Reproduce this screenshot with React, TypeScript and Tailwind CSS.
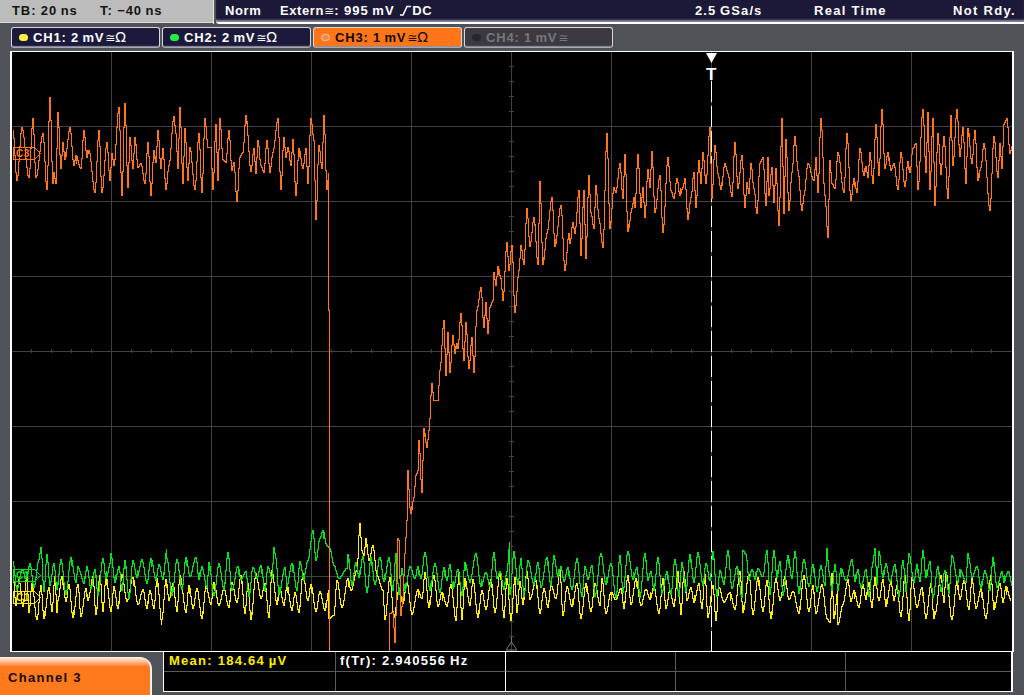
type Pt = [number, number];

const font = { fontFamily: '"Liberation Sans", "DejaVu Sans", sans-serif' };

// zoom crops were 3x, so these first points are still in crop coordinates
const fromCrop = (pts: number[], ox: number, oy: number): Pt[] => {
    const out: Pt[] = [];
    for (let i = 0; i < pts.length; i += 2) out.push([ox + pts[i] / 3, oy + pts[i + 1] / 3]);
    return out;
};

const ch3Flat = fromCrop(
    [
        36, 120, 47, 270, 62, 112, 85, 262, 96, 85, 105, 262, 125, 130, 138, 298, 146, 22, 155, 280, 160, 245, 165, 280, 170, 67, 180, 235, 186, 157, 192, 208,
        207, 112, 218, 225, 225, 195, 240, 235, 249, 120, 258, 200, 265, 180, 282, 305, 294, 120, 303, 307, 318, 157, 327, 270, 333, 190, 340, 225, 355, 50,
        363, 315, 372, 40, 381, 290, 388, 140, 397, 235, 403, 140, 412, 230, 420, 220, 432, 280, 440, 157, 450, 315, 458, 180, 464, 215, 470, 120, 480, 235,
        486, 175, 495, 297, 503, 225, 519, 78, 525, 130, 530, 235, 537, 50, 547, 280, 553, 115, 560, 270, 568, 170, 582, 297, 594, 130, 603, 307, 613, 85,
        622, 170, 630, 170, 637, 297, 645, 103, 650, 270, 658, 85, 667, 207, 676, 215, 685, 120, 692, 240, 700, 215, 708, 333, 716, 200, 725, 185, 735, 75,
        750, 243, 758, 175, 765, 250, 772, 150, 780, 225, 788, 245, 797, 150, 806, 245, 816, 185, 830, 85, 840, 297, 848, 140, 856, 200, 862, 170, 870, 225,
        877, 148, 885, 315, 895, 175, 906, 235, 915, 175, 922, 280, 930, 85, 938, 150, 946, 388, 955, 165, 963, 235, 968, 75, 978, 297, 985, 245, 985, 660,
    ],
    0,
    90,
).concat([
    [328, 310],
    [329, 310],
    [329, 652],
]);

const ch3Rise: Pt[] = [
    [389, 652], [389, 613], [392, 612], [394, 642], [397, 538], [398, 540], [400, 615], [402, 597], [404, 553], [406, 520], [407, 470], [409, 507], [410, 513],
    [413, 497], [415, 475], [417, 470], [418, 440], [421, 492], [423, 428], [426, 447], [428, 430], [431, 383], [433, 400], [437, 400], [439, 370], [443, 320],
    [445, 375], [447, 332], [449, 372], [452, 335], [454, 353], [456, 343], [457, 348], [460, 313], [463, 360], [465, 322], [468, 368], [471, 337], [473, 372],
    [476, 310], [480, 287], [483, 327], [485, 302], [487, 333], [489, 307], [492, 300], [493, 272], [495, 285], [497, 266], [500, 278], [502, 300], [506, 242],
    [508, 270], [511, 245], [514, 312], [518, 270], [520, 245], [523, 264], [526, 208], [529, 246], [533, 217], [537, 264], [539, 181], [542, 264], [546, 233],
    [551, 197], [554, 246], [560, 205], [564, 270], [568, 233], [569, 243], [572, 222], [574, 233], [578, 190], [580, 255], [583, 190], [585, 258], [588, 175],
    [590, 212], [593, 228], [595, 185], [598, 218], [602, 247], [606, 133], [609, 228], [613, 187], [615, 192], [619, 163], [622, 198], [624, 154], [627, 231],
    [631, 208], [633, 197], [634, 207], [637, 154], [640, 207], [642, 187], [644, 217], [647, 169], [649, 187], [651, 151], [654, 212], [659, 175], [662, 232],
    [667, 157], [670, 190], [673, 198], [676, 178], [679, 195], [682, 187], [684, 178], [687, 219], [690, 197], [693, 172], [695, 207], [698, 160], [700, 183],
    [702, 152], [705, 183], [709, 127], [711, 198], [714, 145], [717, 173], [720, 189], [724, 163], [727, 173], [731, 196], [734, 142], [737, 188], [741, 155],
    [744, 207], [746, 182], [748, 193], [750, 163], [753, 188], [756, 213], [759, 163], [762, 157], [765, 205], [767, 157], [768, 195], [771, 167], [773, 202],
    [775, 168], [778, 225], [781, 118], [783, 213], [785, 139], [788, 210], [791, 172], [794, 136], [797, 170], [801, 210], [803, 195], [807, 163], [813, 180],
    [815, 157], [817, 192], [820, 118], [824, 195], [827, 237], [829, 160], [831, 183], [834, 188], [837, 152], [843, 192], [846, 133], [850, 200], [853, 178],
    [856, 192], [859, 148], [863, 175], [865, 166], [867, 177], [869, 152], [872, 183], [875, 124], [878, 175], [881, 109], [884, 168], [887, 152], [890, 170],
    [893, 163], [897, 189], [900, 152], [904, 186], [907, 161], [909, 172], [912, 148], [915, 143], [917, 189], [922, 109], [925, 172], [927, 112], [929, 189],
    [932, 118], [934, 205], [937, 133], [940, 174], [943, 136], [947, 198], [950, 115], [952, 165], [956, 109], [959, 156], [962, 127], [965, 183], [967, 128],
    [971, 163], [974, 130], [977, 180], [980, 167], [983, 143], [989, 210], [993, 136], [997, 177], [999, 143], [1001, 168], [1003, 124], [1006, 118], [1009, 153],
    [1012, 143],
];

// small seeded generator so the noise is the same every run
function makeRandom(seed: number) {
    let s = seed;
    return () => {
        s = (s + 0x6d2b79f5) | 0;
        let t = Math.imul(s ^ (s >>> 15), 1 | s);
        t = (t + Math.imul(t ^ (t >>> 7), 61 | t)) ^ t;
        return ((t ^ (t >>> 14)) >>> 0) / 4294967296;
    };
}

function noise(seed: number, high: [number, number], low: [number, number], events: Pt[], peaks: Pt[]): Pt[] {
    const rnd = makeRandom(seed);
    const pts: Pt[] = [];
    let up = true;
    const from = events[0][0];
    const to = events[events.length - 1][0];
    for (let x = 12; x < 1012; x += 2.6 + rnd() * 3) {
        if (x > from && x < to) continue;
        const band = up ? high : low;
        pts.push([x, band[0] + rnd() * (band[1] - band[0])]);
        up = !up;
    }
    return [...pts, ...events, ...peaks].sort((a, b) => a[0] - b[0]);
}

const ch2 = noise(
    11,
    [550, 572],
    [576, 598],
    [
        [303, 575], [307, 560], [312, 530], [315, 560], [319, 538], [322, 530], [326, 545], [329, 548], [333, 565], [338, 578], [346, 568],
    ],
    [[40, 547], [110, 553], [166, 548], [273, 547], [509, 541], [742, 550], [826, 548], [874, 548], [968, 558]],
);

const ch1 = noise(
    29,
    [570, 592],
    [598, 620],
    [
        [350, 590], [356, 570], [359, 523], [361, 550], [363, 555], [365, 538], [368, 560], [372, 545], [376, 575], [382, 590],
    ],
    [[161, 624], [328, 618], [56, 612], [829, 622], [837, 624], [933, 618]],
);

function stepped(pts: Pt[]) {
    let d = `M${Math.round(pts[0][0]) + 0.5} ${Math.round(pts[0][1]) + 0.5}`;
    let caps = "";
    for (let i = 1; i < pts.length; i++) {
        const x0 = Math.round(pts[i - 1][0]);
        const x1 = Math.round(pts[i][0]);
        const yEnd = Math.round(pts[i][1]);
        if (x1 === x0) {
            d += `V${yEnd + 0.5}`;
        } else {
            for (let x = x0 + 1; x <= x1; x++) {
                const t = (x - x0) / (x1 - x0);
                // eased so the flanks come out as steep runs, the way the scope draws them
                const y = pts[i - 1][1] + t * t * (3 - 2 * t) * (pts[i][1] - pts[i - 1][1]);
                d += `H${x + 0.5}V${Math.round(y) + 0.5}`;
            }
        }
        // the scope holds some extremes for a sample, which reads as a thick tip
        const next = pts[i + 1];
        if (next && i % 3 === 0 && (pts[i][1] - pts[i - 1][1]) * (next[1] - pts[i][1]) < 0) {
            const dir = pts[i][1] < next[1] ? 1 : -1;
            caps += `M${x1 + 1.5} ${yEnd + 0.5}V${yEnd + 0.5 + dir * 8}`;
        }
    }
    return d + caps;
}

const gridX = [111, 211, 311, 411, 511, 611, 711, 811, 911];
const gridY = [126, 201, 276, 351, 426, 501, 576];
const ticksX = Array.from({ length: 49 }, (_, i) => 31 + i * 20);
const ticksY = Array.from({ length: 39 }, (_, i) => 66 + i * 15);

function Flag({ y, color, label }: { y: number; color: string; label: string }) {
    return (
        <g>
            <path d={`M13.5 ${y + 0.5}H34.5L40.5 ${y + 6.5}L34.5 ${y + 12.5}H13.5Z`} fill="none" stroke={color} shapeRendering="crispEdges" />
            <text x={16} y={y + 10} fontSize={10} fontWeight={700} fill={color} style={font}>
                {label}
            </text>
        </g>
    );
}

function Scope() {
    return (
        <svg width={1000} height={599} viewBox="12 52 1000 599" className="block bg-black">
            <g stroke="#414141" shapeRendering="crispEdges">
                {gridX.map((x) => (
                    <line key={x} x1={x + 0.5} x2={x + 0.5} y1={52} y2={651} />
                ))}
                {gridY.map((y) => (
                    <line key={y} y1={y + 0.5} y2={y + 0.5} x1={12} x2={1012} />
                ))}
                {ticksX.map((x) => (
                    <line key={x} x1={x + 0.5} x2={x + 0.5} y1={349} y2={353} />
                ))}
                {ticksY.map((y) => (
                    <line key={y} y1={y + 0.5} y2={y + 0.5} x1={509} x2={514} />
                ))}
            </g>

            {/* trigger position */}
            <line x1={711.5} x2={711.5} y1={81} y2={651} stroke="#fff" strokeDasharray="21 4" shapeRendering="crispEdges" />
            <path d="M706 53H717L711.5 63Z" fill="#fff" />
            <text x={711.5} y={80} textAnchor="middle" fontSize={17} fontWeight={700} fill="#fff" style={font}>
                T
            </text>
            <path d="M511.5 637V642M511.5 642L506 650H517Z" fill="none" stroke="#777" />

            <g fill="none" strokeLinejoin="miter" shapeRendering="crispEdges">
                <path d={stepped(ch1)} stroke="#ffee00" />
                <path d={stepped(ch2)} stroke="#00e61a" />
                <path d={stepped(ch3Flat)} stroke="#ff7518" />
                <path d={stepped(ch3Rise)} stroke="#ff7518" />
            </g>

            <Flag y={147} color="#ff7518" label="C3" />
            <Flag y={569} color="#00e61a" label="C2" />
            <Flag y={591} color="#ffee00" label="C1" />
        </svg>
    );
}

function Coupling({ ohm = true, className }: { ohm?: boolean; className: string }) {
    return (
        <span className={`font-normal tracking-normal ${className}`} style={{ fontFamily: '"DejaVu Sans", sans-serif' }}>
            <span className="text-[12px]">≅</span>
            {ohm && <span className="text-[14px]">Ω</span>}
        </span>
    );
}

const tabs = [
    { label: "CH1: 2\u2009mV", box: "bg-[#1c1a3c] text-white", dot: "bg-[#fff23a]", ohm: true },
    { label: "CH2: 2\u2009mV", box: "bg-[#1c1a3c] text-white", dot: "bg-[#22ee44]", ohm: true },
    { label: "CH3: 1\u2009mV", box: "bg-[#ff7518] text-[#120a04]", dot: "bg-[#f28a4a] border border-[#f4d0b0]", ohm: true },
    { label: "CH4: 1\u2009mV", box: "bg-[#3c3a40] text-[#77777b]", dot: "bg-[#26262a]", ohm: false },
];

export default function App() {
    return (
        <div className="w-[1024px] h-[695px] overflow-hidden flex flex-col bg-[#4f5357] text-[13px] font-bold tracking-[0.6px]" style={font}>
            <div className="flex h-[24px] shrink-0">
                <div className="w-[213px] h-[23px] flex items-center bg-[#bcbcbc] text-[#141414] pl-[12px] pb-[1px] border-b border-[#dcdcdc] tracking-[0.9px]">
                    <span className="w-[88px]">TB: 20&#8201;ns</span>
                    <span>T: &#8722;40&#8201;ns</span>
                </div>
                <div className="w-[3px] h-[24px] bg-[#4f5357] border-l border-[#e8e8e8]" />
                <div className="flex-1 h-[24px] flex items-start text-white bg-[#1b1838] rounded-bl-[3px] border-b-2 border-white shadow-[inset_0_-3px_2px_-1px_#8b8aa0]">
                    <div className="flex items-center h-[21px] pl-[9px]">
                        <span className="w-[55px]">Norm</span>
                        <span className="w-[415px] flex items-center">
                            Extern
                            <Coupling ohm={false} className="" />
                            <span className="tracking-[1px]">: 995&#8201;mV&nbsp;</span>
                            <svg width={11} height={11} viewBox="0 0 11 11" className="mx-[1px]">
                                <path d="M0 10H3L7 1.5H11" fill="none" stroke="#fff" strokeWidth={1.6} />
                            </svg>
                            DC
                        </span>
                        <span className="w-[119px] tracking-[1.1px]">2.5&#8201;GSa/s</span>
                        <span className="w-[139px] tracking-[1.3px]">Real Time</span>
                        <span className="tracking-[1.3px]">Not Rdy.</span>
                    </div>
                </div>
            </div>

            <div className="flex gap-[2px] ml-[11px] mt-[3px] h-[21px] shrink-0">
                {tabs.map((tab) => (
                    <div
                        key={tab.label}
                        className={`w-[149px] flex items-center pl-[7px] rounded-[3px] border border-[#d8d8dc] border-b-[#a8a8b0] shadow-[inset_0_-2px_1px_-1px_#8f8f9f] tracking-[0.8px] ${tab.box}`}
                    >
                        <span className={`w-[9px] h-[7px] rounded-full mr-[5px] ${tab.dot}`} />
                        {tab.label}
                        <Coupling ohm={tab.ohm} className="ml-[1px]" />
                    </div>
                ))}
            </div>

            <div className="ml-[10px] mt-[3px] w-[1004px] h-[601px] shrink-0 border-l-2 border-r-2 border-y border-white">
                <Scope />
            </div>

            <div className="flex items-start">
                <div className="w-[152px] h-[38px] mt-[5px] flex items-center pl-[8px] pt-[4px] rounded-tr-[12px] border-r-2 border-[#f4f4f4] text-[#140a02] tracking-[1.3px] bg-gradient-to-b from-[#fff4ea] via-[#ff7a1c] via-[25%] to-[#ff7a1c]">
                    Channel 3
                </div>
                <div className="ml-[11px] w-[850px] h-[40px] grid grid-cols-[172px_170px_170px_170px_165px] grid-rows-[20px_19px] border-l border-r-2 border-b border-white bg-black tracking-[1.25px]">
                    <div className="border-r border-b border-[#5a5a5a] flex items-center pl-[5px] pb-[1px] text-[#ffee00]">
                        Mean: 184.64&#8201;µV
                    </div>
                    <div className="border-r border-b border-b-[#5a5a5a] border-r-white flex items-center pl-[4px] pb-[1px] text-white">
                        f(Tr): 2.940556&#8201;Hz
                    </div>
                    <div className="border-r border-b border-[#5a5a5a]" />
                    <div className="border-r border-b border-[#5a5a5a]" />
                    <div className="border-b border-[#5a5a5a]" />
                    <div className="border-r border-[#5a5a5a]" />
                    <div className="border-r border-white" />
                    <div className="border-r border-[#5a5a5a]" />
                    <div className="border-r border-[#5a5a5a]" />
                    <div />
                </div>
            </div>
        </div>
    );
}
